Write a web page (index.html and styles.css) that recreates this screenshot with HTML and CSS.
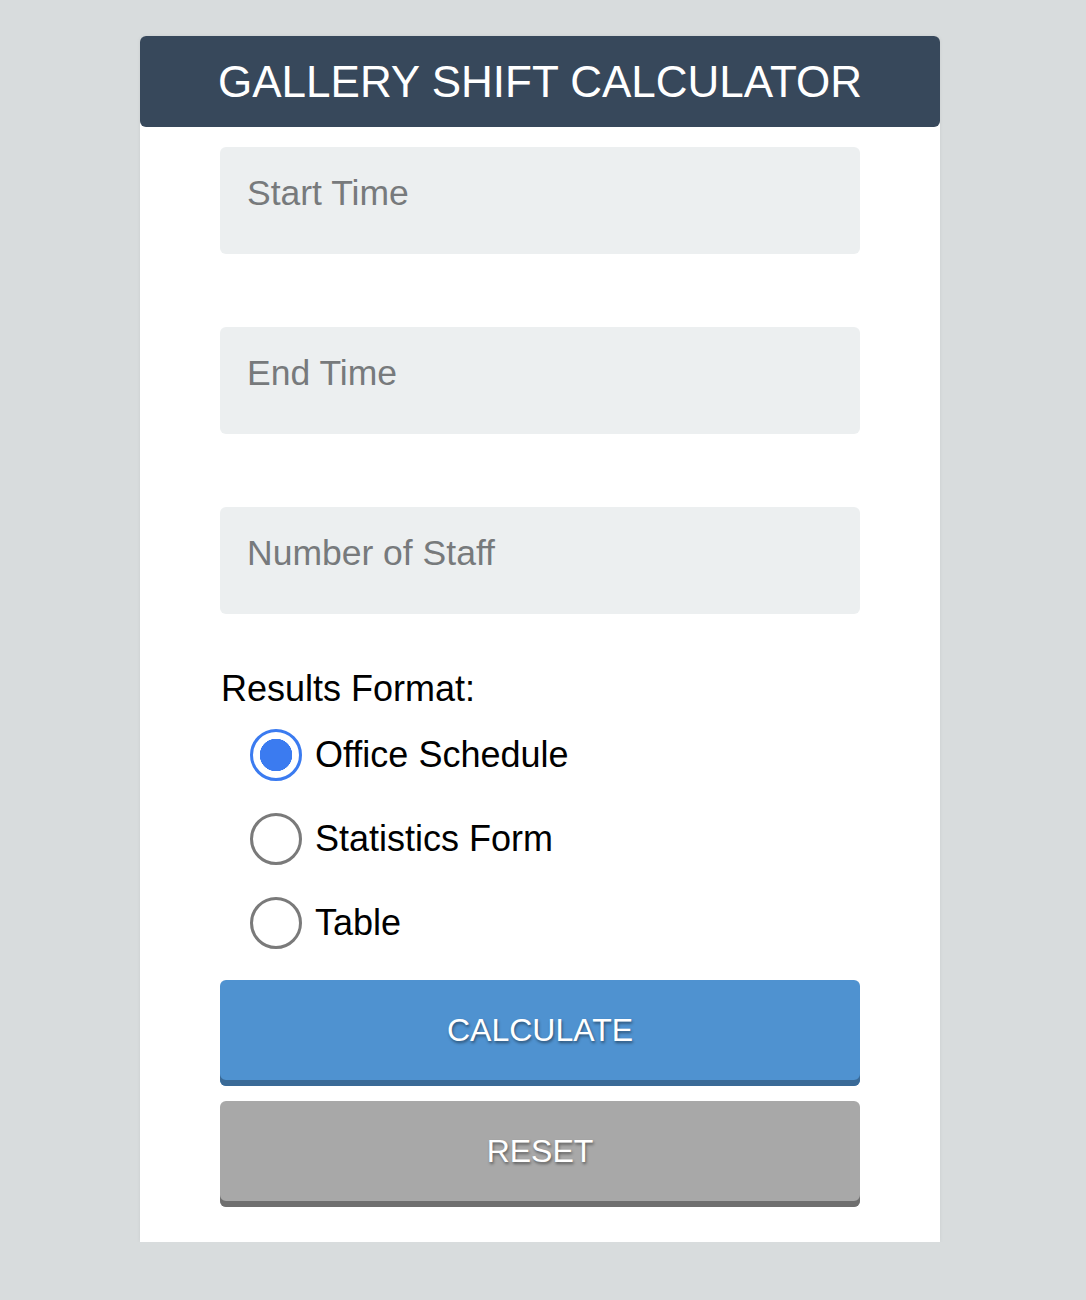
FILE: index.html
```html
<!DOCTYPE html>
<html lang="en">
<head>
<meta charset="utf-8">
<title>Gallery Shift Calculator</title>
<link rel="stylesheet" href="styles.css">
</head>
<body>
<div class="card">
  <header class="card-header">
    <h1 class="title">GALLERY SHIFT CALCULATOR</h1>
  </header>
  <form class="form">
    <input class="field" type="text" placeholder="Start Time">
    <input class="field" type="text" placeholder="End Time">
    <input class="field" type="text" placeholder="Number of Staff">
    <div class="group-label">Results Format:</div>
    <div class="radios">
      <label class="radio-row"><input class="radio" type="radio" name="fmt" checked><span>Office Schedule</span></label>
      <label class="radio-row"><input class="radio" type="radio" name="fmt"><span>Statistics Form</span></label>
      <label class="radio-row"><input class="radio" type="radio" name="fmt"><span>Table</span></label>
    </div>
    <button type="button" class="btn btn-calc">CALCULATE</button>
    <button type="reset" class="btn btn-reset">RESET</button>
  </form>
</div>
</body>
</html>
```

FILE: styles.css
```css
html, body {
  margin: 0;
  padding: 0;
  background: #d8dcdd;
  font-family: "Liberation Sans", Arial, Helvetica, sans-serif;
}

.card {
  width: 800px;
  margin: 36px 0 0 140px;
  background: #ffffff;
  box-shadow: 0 0 4px rgba(0, 0, 0, 0.06);
  border-radius: 6px 6px 0 0;
}

.card-header {
  height: 91px;
  background: #37485b;
  border-radius: 6px;
  display: flex;
  align-items: center;
  justify-content: center;
}

.title {
  margin: 0;
  color: #ffffff;
  font-weight: normal;
  font-size: 44px;
  line-height: 1;
  padding-top: 1px;
}

.form {
  display: flex;
  flex-direction: column;
  padding: 20px 80px 35px;
}

.field {
  display: block;
  box-sizing: border-box;
  width: 640px;
  height: 107px;
  margin: 0 0 73px;
  padding: 0 27px 15px;
  border: none;
  border-radius: 6px;
  background: #eceff0;
  font-family: inherit;
  font-size: 35.5px;
  color: #333;
  outline: none;
}

.field:nth-of-type(3) {
  margin-bottom: 55px;
}

.field::placeholder {
  color: #777a7c;
}

.group-label {
  font-size: 36px;
  line-height: 40px;
  color: #000;
  padding-left: 1px;
}

.radios {
  display: flex;
  flex-direction: column;
  padding: 4px 0 0 30px;
}

.radio-row {
  height: 84px;
  display: flex;
  align-items: center;
  gap: 13px;
  font-size: 36px;
  color: #000;
}

.radio {
  appearance: none;
  -webkit-appearance: none;
  margin: 0;
  width: 52px;
  height: 52px;
  box-sizing: border-box;
  border: 3.5px solid #7a7a7a;
  border-radius: 50%;
  background: #fff;
  flex: none;
}

.radio:checked {
  border-color: #3b7bf0;
  background: radial-gradient(circle, #3b7bf0 0 16px, #fff 16.5px);
}

.btn {
  display: block;
  width: 640px;
  height: 106px;
  box-sizing: border-box;
  border: none;
  border-radius: 6px;
  margin-top: 15px;
  color: #fff;
  font-family: inherit;
  font-size: 32px;
  text-shadow: 1px 2px 3px rgba(0, 0, 0, 0.45);
  padding: 0 0 6px;
  cursor: pointer;
}

.btn-calc {
  background: #4f92d0;
  box-shadow: inset 0 -6px 0 #3a6a97;
}

.btn-reset {
  background: #a8a8a8;
  box-shadow: inset 0 -6px 0 #6f6f6f;
}
```
